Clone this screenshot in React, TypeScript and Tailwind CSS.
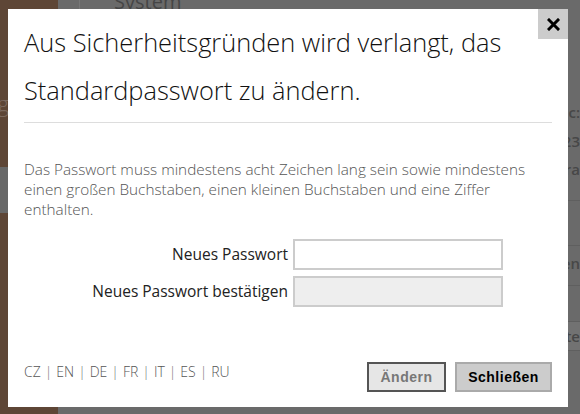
import { useState } from "react";

const languages = ["CZ", "EN", "DE", "FR", "IT", "ES", "RU"];

function Backdrop() {
  return (
    <div className="flex h-[414px] w-[580px] overflow-hidden bg-[#6a6a6a] font-['Open_Sans',sans-serif]">
      <aside className="flex w-[58px] shrink-0 flex-col bg-[#5e4636]">
        <div className="h-[88px]" />
        <div className="flex w-[9px] justify-end overflow-hidden whitespace-nowrap text-[22px] font-light leading-[30px] text-[#7d6a5e]">
          ng
        </div>
        <div className="h-[49px]" />
        <div className="h-[46px] bg-[#686868]" />
      </aside>
      <main className="flex flex-1 flex-col">
        <div className="flex h-[9px] items-end">
          <div className="h-full w-[22px] border-r border-[#777]" />
          <span className="ml-[34px] text-[20px] leading-[14px] text-[#454545]">System</span>
        </div>
        <div className="flex flex-1 flex-col items-end pt-[92px] text-[15px] font-semibold text-[#474747]">
          <div className="h-[22px] leading-[22px]">c:</div>
          <div className="h-[36px] leading-[36px]">23</div>
          <div className="h-[42px] w-full border-b border-[#5f5f5f] text-right leading-[20px]">ra</div>
          <div className="h-[45px] w-full border-b border-[#5f5f5f]" />
          <div className="h-[40px] w-full border-b border-[#5f5f5f] text-right leading-[34px]">en</div>
          <div className="h-[35px] w-full" />
          <div className="h-[30px] w-full border-y border-[#5f5f5f] bg-[#727272] text-right leading-[28px]">te</div>
        </div>
      </main>
    </div>
  );
}

export default function App() {
  const [pw, setPw] = useState("");
  const [confirm, setConfirm] = useState("");

  return (
    <div className="relative h-[414px] w-[580px] overflow-hidden">
      <Backdrop />

      <div className="absolute left-[8px] top-[9px] flex h-[398px] w-[560px] flex-col bg-white px-4 pb-[15px] font-['Open_Sans',sans-serif]">
        <button className="absolute right-0 top-0 flex h-[30px] w-[30px] items-center justify-center bg-[#cccccc]">
          <svg width="13" height="13" viewBox="0 0 13 13">
            <path d="M2 2 L11 11 M11 2 L2 11" stroke="#000" strokeWidth="3" strokeLinecap="square" />
          </svg>
        </button>

        <h1 className="border-b border-[#dddddd] pb-[8px] pt-[9px] text-[25.4px] font-light leading-[48px] text-[#111111]">
          Aus Sicherheitsgründen wird verlangt, das
          <br />
          Standardpasswort zu ändern.
        </h1>

        <p className="mt-[36px] text-[15.3px] font-light leading-[20px] text-[#555555]">
          Das Passwort muss mindestens acht Zeichen lang sein sowie mindestens
          <br />
          einen großen Buchstaben, einen kleinen Buchstaben und eine Ziffer
          <br />
          enthalten.
        </p>

        <div className="mt-[20px] flex flex-col gap-[6px]">
          <div className="flex items-center">
            <label className="w-[269px] pr-[5px] text-right text-[15.5px] text-[#222222]">Neues Passwort</label>
            <input
              type="password"
              value={pw}
              onChange={(e) => setPw(e.target.value)}
              className="h-[31px] w-[210px] border-2 border-[#cccccc] bg-white px-2 outline-none"
            />
          </div>
          <div className="flex items-center">
            <label className="w-[269px] pr-[5px] text-right text-[15.5px] text-[#222222]">Neues Passwort bestätigen</label>
            <input
              type="password"
              disabled
              value={confirm}
              onChange={(e) => setConfirm(e.target.value)}
              className="h-[31px] w-[210px] border-2 border-[#cccccc] bg-[#eeeeee] px-2 outline-none"
            />
          </div>
        </div>

        <div className="mt-auto flex items-end justify-between">
          <div className="mb-[10px] text-[14px] font-light text-[#555555]">
            {languages.map((l, i) => (
              <span key={l}>
                {i > 0 && <span className="mx-[4px] text-[#777777]">|</span>}
                <a className="cursor-pointer">{l}</a>
              </span>
            ))}
          </div>
          <div className="flex gap-[9px]">
            <button
              disabled
              className="h-[30px] w-[79px] border-2 border-[#555555] bg-[#e6e6e6] font-['Liberation_Sans',sans-serif] text-[14px] font-bold tracking-[0.5px] text-[#777777]"
            >
              Ändern
            </button>
            <button className="h-[30px] w-[97px] border-2 border-[#aaaaaa] bg-[#cccccc] font-['Liberation_Sans',sans-serif] text-[14px] font-bold tracking-[0.5px] text-black">
              Schließen
            </button>
          </div>
        </div>
      </div>
    </div>
  );
}
